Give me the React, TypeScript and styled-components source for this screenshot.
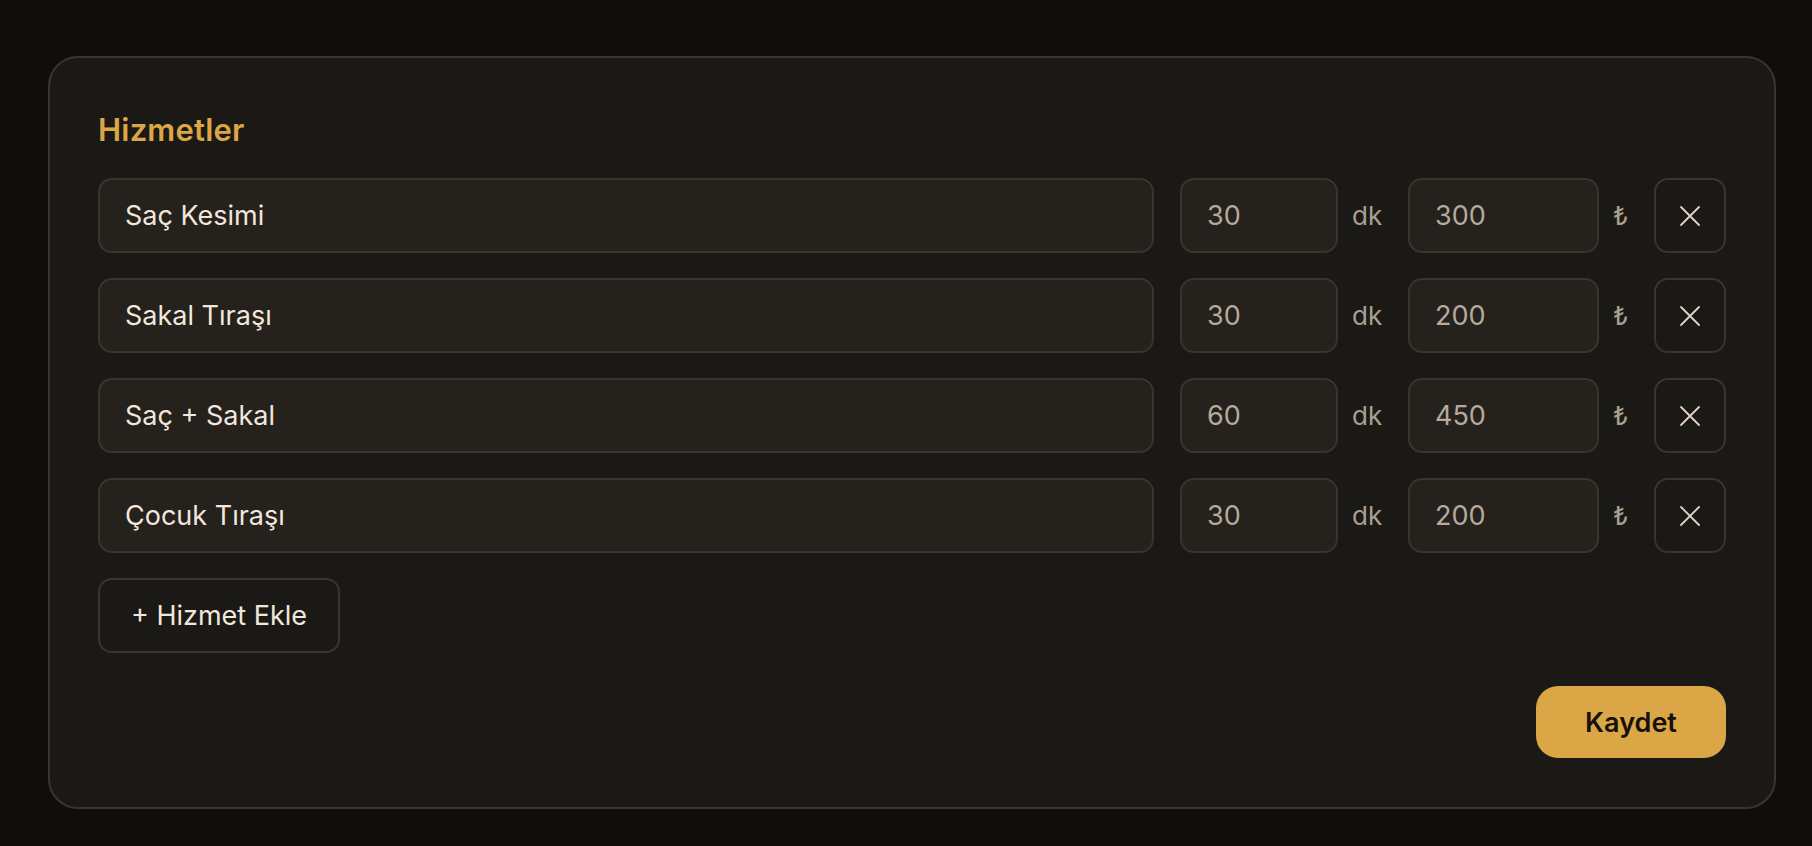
import React, { useState } from 'react';
import styled, { createGlobalStyle } from 'styled-components';

const GlobalStyle = createGlobalStyle`
  html, body {
    margin: 0;
    padding: 0;
    background: #0f0e0c;
  }
  body {
    font-family: Inter, "Noto Sans", "Liberation Sans", sans-serif;
    color: #f1e7dd;
  }
  * { box-sizing: border-box; }
`;

const Page = styled.div`
  min-height: 846px;
  padding: 56px 36px 39px 48px;
`;

const Card = styled.section`
  background: #1b1915;
  border: 2px solid #3a342d;
  border-radius: 30px;
  padding: 48px 48px 49px 48px;
`;

const Title = styled.h2`
  margin: 0 0 24px;
  font-size: 31px;
  line-height: 48px;
  font-weight: 600;
  color: #dba645;
  letter-spacing: 0.2px;
`;

const List = styled.div`
  display: flex;
  flex-direction: column;
  gap: 25px;
`;

const Row = styled.div`
  display: flex;
  align-items: center;
  gap: 26px;
  height: 75px;
`;

const Group = styled.div`
  display: flex;
  align-items: center;
  gap: 14px;
`;

const Field = styled.input<{ width?: string; muted?: boolean }>`
  height: 75px;
  width: ${({ width }) => width || 'auto'};
  flex: ${({ width }) => (width ? '0 0 auto' : '1')};
  min-width: 0;
  background: #25211c;
  border: 2px solid #3a342d;
  border-radius: 14px;
  padding: 0 25px;
  font-family: inherit;
  font-size: 27px;
  color: ${({ muted }) => (muted ? '#b5aa9b' : '#f1e7dd')};
  outline: none;
`;

const Unit = styled.span<{ width: string }>`
  width: ${({ width }) => width};
  font-size: 26px;
  color: #a99f91;
`;

const RemoveButton = styled.button`
  width: 72px;
  height: 75px;
  flex: 0 0 auto;
  display: flex;
  align-items: center;
  justify-content: center;
  background: transparent;
  border: 2px solid #3a342d;
  border-radius: 14px;
  color: #e3d2c6;
  cursor: pointer;
  padding: 0;
`;

const AddButton = styled.button`
  margin-top: 25px;
  height: 75px;
  width: 242px;
  background: transparent;
  border: 2px solid #3a342d;
  border-radius: 14px;
  font-family: inherit;
  font-size: 27px;
  color: #f1e7dd;
  cursor: pointer;
`;

const Footer = styled.div`
  display: flex;
  justify-content: flex-end;
  margin-top: 33px;
`;

const SaveButton = styled.button`
  width: 190px;
  height: 72px;
  background: #dba645;
  border: none;
  border-radius: 22px;
  font-family: inherit;
  font-size: 27px;
  font-weight: 600;
  color: #15120e;
  cursor: pointer;
`;

interface Service {
  name: string;
  duration: string;
  price: string;
}

const initialServices: Service[] = [
  { name: 'Saç Kesimi', duration: '30', price: '300' },
  { name: 'Sakal Tıraşı', duration: '30', price: '200' },
  { name: 'Saç + Sakal', duration: '60', price: '450' },
  { name: 'Çocuk Tıraşı', duration: '30', price: '200' },
];

const CloseIcon = () => (
  <svg width="22" height="22" viewBox="0 0 22 22" fill="none">
    <path d="M2 2L20 20M20 2L2 20" stroke="currentColor" strokeWidth="1.8" strokeLinecap="round" />
  </svg>
);

const App = () => {
  const [services, setServices] = useState<Service[]>(initialServices);

  const update = (i: number, key: keyof Service, value: string) => {
    setServices((prev) => prev.map((s, idx) => (idx === i ? { ...s, [key]: value } : s)));
  };

  return (
    <Page>
      <GlobalStyle />
      <Card>
        <Title>Hizmetler</Title>
        <List>
          {services.map((s, i) => (
            <Row key={i}>
              <Field value={s.name} onChange={(e) => update(i, 'name', e.target.value)} />
              <Group>
                <Field width="158px" muted value={s.duration} onChange={(e) => update(i, 'duration', e.target.value)} />
                <Unit width="30px">dk</Unit>
              </Group>
              <Group>
                <Field width="191px" muted value={s.price} onChange={(e) => update(i, 'price', e.target.value)} />
                <Unit width="15px">₺</Unit>
              </Group>
              <RemoveButton onClick={() => setServices((prev) => prev.filter((_, idx) => idx !== i))}>
                <CloseIcon />
              </RemoveButton>
            </Row>
          ))}
        </List>
        <AddButton onClick={() => setServices((prev) => [...prev, { name: '', duration: '30', price: '' }])}>
          + Hizmet Ekle
        </AddButton>
        <Footer>
          <SaveButton>Kaydet</SaveButton>
        </Footer>
      </Card>
    </Page>
  );
};

export default App;
